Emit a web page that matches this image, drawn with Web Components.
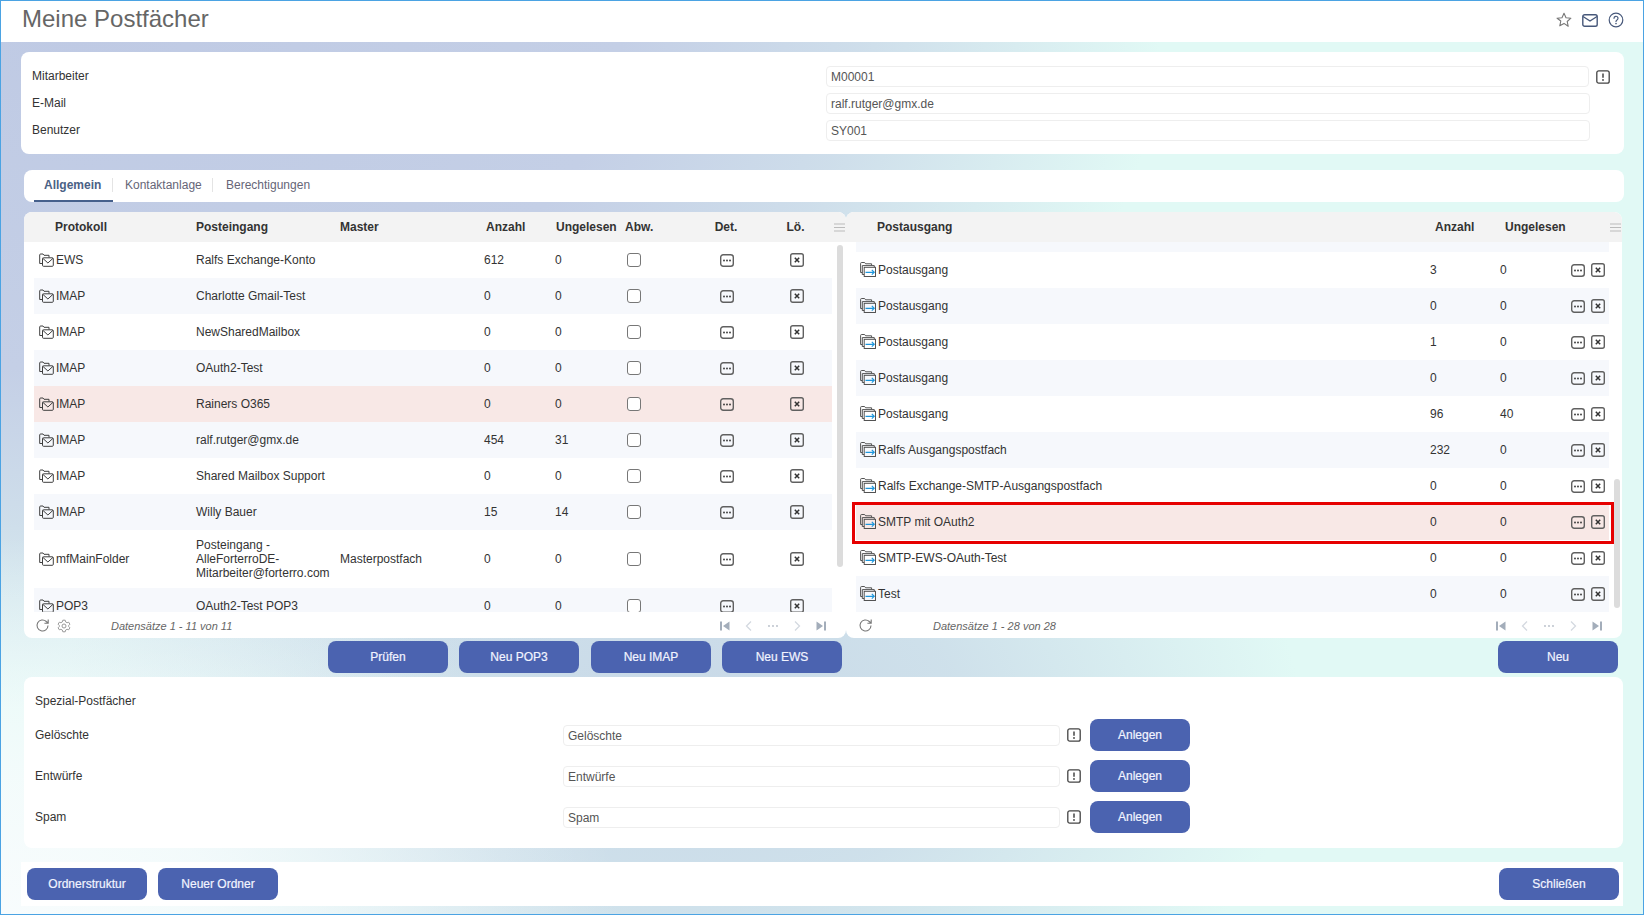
<!DOCTYPE html>
<html lang="de"><head><meta charset="utf-8"><title>Meine Postfächer</title>
<style>
html,body{margin:0;padding:0;background:#fff}
body{font:12px "Liberation Sans",Arial,sans-serif;color:#333;width:1644px;height:915px;overflow:hidden}
</style></head><body>
<mail-app></mail-app>
<script>
const ICONS={
 star:'<svg width="16" height="16" viewBox="0 0 16 16" fill="none" stroke="#777" stroke-width="1.1" stroke-linejoin="round"><path d="M8 1.2l2 4.500 4.900.5-3.700 3.300 1 4.800L8 11.400l-4.200 2.400 1-4.800L1.100 6.200 6 5.700z"/></svg>',
 mail:'<svg width="16" height="13" viewBox="0 0 16 13" fill="none" stroke="#47587a" stroke-width="1.400"><rect x=".8" y=".8" width="14.400" height="11.400" rx="1.800"/><path d="M1 2.500l7 4.500 7-4.500"/></svg>',
 help:'<svg width="16" height="16" viewBox="0 0 16 16" fill="none" stroke="#47587a" stroke-width="1.200"><circle cx="8" cy="8" r="6.800"/><path d="M6 6.300a2 2 0 1 1 3 1.700c-.7.400-1 .8-1 1.500" stroke-linecap="round"/><circle cx="8" cy="11.600" r=".8" fill="#47587a" stroke="none"/></svg>',
 info:'<svg width="14" height="14" viewBox="0 0 14 14" fill="none" stroke="#444" stroke-width="1.300"><rect x=".8" y=".8" width="12.400" height="12.400" rx="2"/><path d="M7 3.500v4.200" stroke-width="1.500"/><circle cx="7" cy="10" r=".9" fill="#444" stroke="none"/></svg>',
 det:'<svg width="14" height="13" viewBox="0 0 14 13" fill="none" stroke="#606060" stroke-width="1.400"><rect x=".7" y=".7" width="12.600" height="11.600" rx="2.500"/><circle cx="4" cy="6.500" r=".9" fill="#333" stroke="none"/><circle cx="7" cy="6.500" r=".9" fill="#333" stroke="none"/><circle cx="10" cy="6.500" r=".9" fill="#333" stroke="none"/></svg>',
 del:'<svg width="14" height="14" viewBox="0 0 14 14" fill="none" stroke="#606060" stroke-width="1.400"><rect x=".7" y=".7" width="12.600" height="12.600" rx="2"/><path d="M4.800 4.800l4.400 4.400m0-4.400l-4.400 4.400" stroke="#333" stroke-width="1.500"/></svg>',
 inbox:'<svg width="15" height="14" viewBox="0 0 15 14" fill="none" stroke="#3f3f3f" stroke-width="1"><path d="M.7 10.500V2a1 1 0 0 1 1-1h2.300l1 1.300h5v2.200"/><path d="M.7 10.500h2.800"/><rect x="3.500" y="4.800" width="10.800" height="8.500" rx="1"/><path d="M3.800 5.300L8.900 10l5.100-4.700"/></svg>',
 outbox:'<svg width="16" height="15" viewBox="0 0 16 15" fill="none" stroke="#4a4a4a" stroke-width=".95"><path d="M.6 10.500V1.500a1 1 0 0 1 1-1h3l1 1.300h6v1.500"/><path d="M.6 10.500h1.700"/><path d="M2.300 12.500V3.600h12v1.600"/><path d="M2.300 12.500h1.900"/><rect x="4.200" y="5.300" width="11.300" height="9.200"/><path d="M5.500 10.300h8.700M11.800 7.900l2.400 2.400-2.400 2.400" stroke="#1e96dc" stroke-width="1.200"/></svg>',
 refresh:'<svg width="15" height="15" viewBox="0 0 15 15" fill="none" stroke="#777" stroke-width="1.100"><path d="M13 7.500a5.500 5.500 0 1 1-1.700-4L13 5M13.200 1.500v3.800H9.400"/></svg>',
 gear:'<svg width="14" height="14" viewBox="0 0 14 14" fill="none" stroke="#999" stroke-width="1"><path d="M5.800 1.200h2.400l.4 1.700 1.500.8 1.600-.5 1.200 2-1.200 1.200v1.200l1.200 1.200-1.200 2-1.600-.5-1.500.8-.4 1.700H5.800l-.4-1.700-1.500-.8-1.600.5-1.200-2 1.200-1.200V6.400L1.100 5.200l1.200-2 1.600.5 1.500-.8z"/><circle cx="7" cy="7" r="2"/></svg>',
 menu:'<svg width="11" height="9" viewBox="0 0 11 9" stroke="#bbb" stroke-width="1"><path d="M0 1h11M0 4.500h11M0 8h11"/></svg>',
 first:'<svg width="12" height="12" viewBox="0 0 12 12" fill="#a3adba"><rect x="1" y="1.500" width="2" height="9"/><path d="M10.500 1.500v9L4 6z"/></svg>',
 prev:'<svg width="12" height="12" viewBox="0 0 12 12" fill="none" stroke="#d4d9e0" stroke-width="1.300"><path d="M8 1.500L3.500 6 8 10.500"/></svg>',
 dots:'<svg width="12" height="12" viewBox="0 0 12 12" fill="#b5bcc6"><circle cx="2" cy="6" r=".9"/><circle cx="6" cy="6" r=".9"/><circle cx="10" cy="6" r=".9"/></svg>',
 next:'<svg width="12" height="12" viewBox="0 0 12 12" fill="none" stroke="#d4d9e0" stroke-width="1.300"><path d="M4 1.500L8.500 6 4 10.500"/></svg>',
 last:'<svg width="12" height="12" viewBox="0 0 12 12" fill="#a3adba"><rect x="9" y="1.500" width="2" height="9"/><path d="M1.500 1.500v9L8 6z"/></svg>'
};
class El extends HTMLElement{
  connectedCallback(){ if(this.shadowRoot) return; this.attachShadow({mode:'open'}).innerHTML='<style>'+this.css()+'</style>'+this.html(); }
  css(){return ''} html(){return '<slot></slot>'}
}
class XIcon extends El{
  css(){return ':host{display:inline-flex;align-items:center;justify-content:center;line-height:0;flex:none}'}
  html(){return ICONS[this.getAttribute('name')]||''}
}
class XBtn extends El{
  css(){return `:host{display:inline-flex;align-items:center;justify-content:center;flex:none;box-sizing:border-box;width:var(--w,120px);height:32px;border-radius:8px;background:#4b63b0;color:#f2f4ff;font-size:12px;-webkit-text-stroke:.2px #f2f4ff}`}
}
class XInput extends El{
  css(){return `:host{display:flex;align-items:center;box-sizing:border-box;height:21px;border:1px solid #eeeeee;border-radius:4px;padding-left:4px;color:#555;font-size:12px;background:#fff}`}
}
class XHeader extends El{
  css(){return `:host{display:flex;align-items:center;flex:none;height:41px;background:#fff;padding:0 19px 0 21px;box-sizing:border-box}
   h1{margin:0 auto 5px 0;font-size:24px;font-weight:400;color:#666}
   .i{display:flex;gap:10px;align-items:center;margin-bottom:3px}`}
  html(){return `<h1>Meine Postfächer</h1><div class="i"><x-icon name="star"></x-icon><x-icon name="mail"></x-icon><x-icon name="help"></x-icon></div>`}
}
class EmployeeCard extends El{
  css(){return `:host{display:grid;grid-template-columns:794px 764px 1fr;grid-auto-rows:21px;row-gap:6px;align-items:center;box-sizing:border-box;height:102px;margin:10px 19px 0 20px;padding:14px 0 0 11px;background:#fff;border-radius:8px;color:#333}
   .l{margin-top:-2px} x-icon{margin-left:6px;justify-self:start}`}
  html(){const r=[['Mitarbeiter','M00001'],['E-Mail','ralf.rutger@gmx.de'],['Benutzer','SY001']];
   return r.map((x,i)=>`<div class="l">${x[0]}</div><x-input ${i==0?'style="margin-right:1px"':''}>${x[1]}</x-input>${i==0?'<x-icon name="info"></x-icon>':'<span></span>'}`).join('')}
}
class XTabs extends El{
  css(){return `:host{display:flex;align-items:stretch;box-sizing:border-box;height:32px;margin:16px 19px 0 23px;padding-left:10px;background:#fff;border-radius:8px;color:#667}
   div{display:flex;align-items:center}
   .a{width:79px;padding-left:10px;box-sizing:border-box;font-weight:700;color:#4a6185;border-bottom:2px solid #46608c}
   .k{width:100px;padding-left:12px;padding-bottom:2px;box-sizing:border-box}
   .b{padding-left:13px;padding-bottom:2px}
   .s{width:1px;height:14px;background:#e4e4e4;align-self:center;margin-left:-1px;margin-bottom:2px}`}
  html(){return `<div class="a">Allgemein</div><div class="s"></div><div class="k">Kontaktanlage</div><div class="s"></div><div class="b">Berechtigungen</div>`}
}
class MailGrid extends El{
  css(){const left=this.hasAttribute('left');
   return `:host{display:flex;flex-direction:column;box-sizing:border-box;height:426px;background:#fff;border-radius:8px;overflow:hidden;width:${left?822:776}px;color:#333}
   .head{display:flex;align-items:center;flex:none;height:30px;background:#f3f3f3;padding-left:10px;font-weight:700}
   .r{display:grid;grid-template-columns:${left?'162px 144px 144px 71px 70px 68px 68px 71px':'574px 70px 68px 41px'};width:${left?798:753}px;align-items:center}
   .head .r>div:first-child{padding-left:21px}
   .c{text-align:center;padding-right:2px}
   .body{display:flex;flex:1;min-height:0;padding-left:10px}
   .rows{width:${left?798:753}px;overflow:hidden;flex:none}
   .row{height:36px;position:relative}
   .row.tall{height:58px}
   .row.s{background:#f6f8fc}
   .row.h{background:#f8e8e6}
   .name{display:flex;align-items:center;gap:2px;padding-left:${left?5:4}px}
   .name x-icon[name=outbox]{margin-top:-2px}
   .cb{width:12px;height:12px;border:1px solid #777;border-radius:3px;margin-left:2px;background:#fff}
   .ic{display:flex;justify-content:center}
   .ic2{display:flex;gap:6px;padding-left:3px}
   .part{height:10px;background:#f6f8fc}
   .box{position:absolute;left:-4px;right:-5px;top:-2px;bottom:-4px;border:3px solid #e60000;pointer-events:none}
   .track{width:6px;margin-left:5px}
   .thumb{background:#dcdcdc;border-radius:3px;width:6px}
   .foot{display:flex;align-items:center;flex:none;height:26px;padding-top:1px;box-sizing:border-box;color:#666;font-style:italic;font-size:11px;padding-left:${left?11:12}px}
   .foot>x-icon{margin-right:7px}
   .txt{margin-left:${left?33:53}px}
   .pg{display:flex;margin-left:auto;gap:12px;padding-right:${left?19:19}px}
   .m{margin-left:${left?2:1}px}`}
  html(){
   const left=this.hasAttribute('left');
   const foot=`<div class="foot"><x-icon name="refresh"></x-icon>${left?'<x-icon name="gear"></x-icon>':''}<span class="txt">Datensätze 1 - ${left?'11 von 11':'28 von 28'}</span><div class="pg"><x-icon name="first"></x-icon><x-icon name="prev"></x-icon><x-icon name="dots"></x-icon><x-icon name="next"></x-icon><x-icon name="last"></x-icon></div></div>`;
   if(left){
    const d=[['EWS','Ralfs Exchange-Konto','',612,0],['IMAP','Charlotte Gmail-Test','',0,0],['IMAP','NewSharedMailbox','',0,0],['IMAP','OAuth2-Test','',0,0],['IMAP','Rainers O365','',0,0,'h'],['IMAP','ralf.rutger@gmx.de','',454,31],['IMAP','Shared Mailbox Support','',0,0],['IMAP','Willy Bauer','',15,14],['mfMainFolder','Posteingang -<br>AlleForterroDE-<br>Mitarbeiter@forterro.com','Masterpostfach',0,0,'','tall'],['POP3','OAuth2-Test POP3','',0,0]];
    const rows=d.map((x,i)=>`<div class="row r ${x[5]||((i%2)?'s':'')} ${x[6]||''}"><div class="name"><x-icon name="inbox"></x-icon><span>${x[0]}</span></div><div>${x[1]}</div><div>${x[2]}</div><div>${x[3]}</div><div>${x[4]}</div><div><div class="cb"></div></div><div class="ic"><x-icon name="det"></x-icon></div><div class="ic"><x-icon name="del"></x-icon></div></div>`).join('');
    return `<div class="head"><div class="r"><div>Protokoll</div><div>Posteingang</div><div>Master</div><div style="padding-left:2px">Anzahl</div><div style="padding-left:1px">Ungelesen</div><div>Abw.</div><div class="c">Det.</div><div class="c">Lö.</div></div><x-icon class="m" name="menu"></x-icon></div>
    <div class="body"><div class="rows">${rows}</div><div class="track"><div class="thumb" style="margin-top:3px;height:322px"></div></div></div>${foot}`;
   }
   const d=[['Postausgang',3,0],['Postausgang',0,0],['Postausgang',1,0],['Postausgang',0,0],['Postausgang',96,40],['Ralfs Ausgangspostfach',232,0],['Ralfs Exchange-SMTP-Ausgangspostfach',0,0],['SMTP mit OAuth2',0,0],['SMTP-EWS-OAuth-Test',0,0],['Test',0,0]];
   const rows=d.map((x,i)=>`<div class="row r ${i==7?'h':(i%2?'s':'')}"><div class="name"><x-icon name="outbox"></x-icon><span>${x[0]}</span></div><div>${x[1]}</div><div>${x[2]}</div><div class="ic2"><x-icon name="det"></x-icon><x-icon name="del"></x-icon></div>${i==7?'<div class="box"></div>':''}</div>`).join('');
   return `<div class="head"><div class="r"><div>Postausgang</div><div style="padding-left:5px">Anzahl</div><div style="padding-left:5px">Ungelesen</div><div></div></div><x-icon class="m" name="menu"></x-icon></div>
   <div class="body"><div class="rows" style="overflow:visible"><div class="part"></div>${rows}</div><div class="track"><div class="thumb" style="margin-top:237px;height:129px"></div></div></div>${foot}`;
  }
}
class SpecialCard extends El{
  css(){return `:host{display:block;box-sizing:border-box;height:171px;margin:4px 20px 0 23px;padding:16px 0 0 11px;background:#fff;border-radius:8px;color:#333}
   .t{height:16px;line-height:16px;margin-bottom:10px}
   .r{display:flex;align-items:center;height:32px;margin-bottom:9px}
   .l{width:528px;margin-top:-1px}
   x-input{width:497px;padding-top:2px}
   x-icon{width:28px;padding-right:2px}
   x-btn{--w:100px}`}
  html(){return `<div class="t">Spezial-Postfächer</div>`+['Gelöschte','Entwürfe','Spam'].map(n=>`<div class="r"><div class="l">${n}</div><x-input>${n}</x-input><x-icon name="info"></x-icon><x-btn>Anlegen</x-btn></div>`).join('')}
}
class MailApp extends El{
  css(){return `:host{display:flex;flex-direction:column;box-sizing:border-box;width:1644px;height:915px;border:1.500px solid #4ba3e3;
    background:
     radial-gradient(ellipse 620px 380px at 0 915px,#f8fcfd 0%,rgba(248,252,253,.8) 35%,rgba(248,252,253,0) 100%),
     radial-gradient(ellipse 1080px 680px at 80px 30px,#bfcae4 0%,#c4cfe6 50%,rgba(198,210,230,.7) 72%,rgba(205,222,235,0) 100%),
     radial-gradient(ellipse 620px 400px at 680px 720px,#c8d8e7 0%,rgba(203,220,233,.85) 45%,rgba(210,230,238,0) 100%),
     #e1f9f5}
   .g{display:flex;margin:10px 20px 0 23px;flex:none}
   .b1{display:flex;margin:3px 0 0 0;flex:none;height:32px}
   .b1 x-btn{margin-left:11px}
   .bar{display:flex;align-items:center;gap:11px;margin:14px 20px 0 20px;padding:0 4px 0 6px;height:44px;box-sizing:border-box;background:#fff;flex:none}
   .sp{flex:1}`}
  html(){return `<x-header></x-header><employee-card></employee-card><x-tabs></x-tabs>
  <div class="g"><mail-grid left></mail-grid><mail-grid></mail-grid></div>
  <div class="b1"><x-btn style="margin-left:327px">Prüfen</x-btn><x-btn>Neu POP3</x-btn><x-btn style="margin-left:12px">Neu IMAP</x-btn><x-btn>Neu EWS</x-btn><x-btn style="margin-left:656px">Neu</x-btn></div>
  <special-card></special-card>
  <div class="bar"><x-btn>Ordnerstruktur</x-btn><x-btn>Neuer Ordner</x-btn><div class="sp"></div><x-btn>Schließen</x-btn></div>`}
}
customElements.define('x-icon',XIcon);customElements.define('x-btn',XBtn);customElements.define('x-input',XInput);
customElements.define('x-header',XHeader);customElements.define('employee-card',EmployeeCard);customElements.define('x-tabs',XTabs);
customElements.define('mail-grid',MailGrid);customElements.define('special-card',SpecialCard);customElements.define('mail-app',MailApp);
</script></body></html>
